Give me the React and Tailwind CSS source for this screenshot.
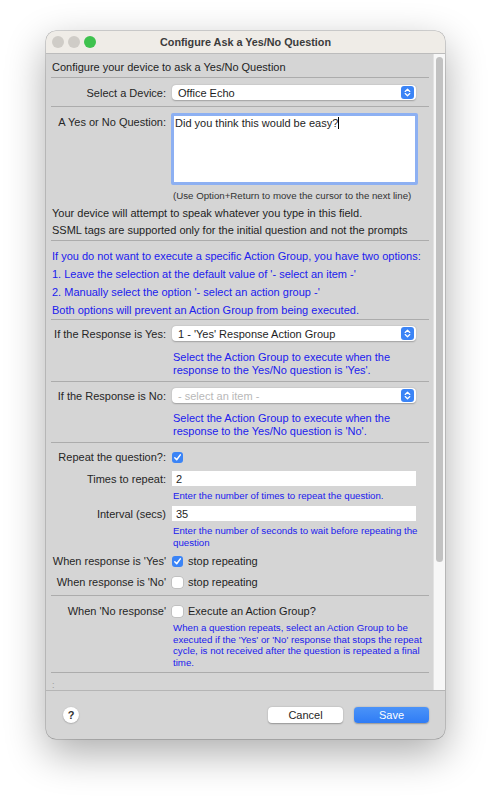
import React from 'react';

const BLUE_TEXT = 'text-[#2020ee]';

function Divider({ className = '' }) {
  return <div className={`h-px shrink-0 bg-[#acacac] ${className}`} />;
}

function Stepper() {
  return (
    <svg width="13" height="13" viewBox="0 0 13 13" className="shrink-0">
      <rect x="0" y="0" width="13" height="13" rx="3" fill="#3b84f6" />
      <path d="M4.2 5.4 L6.5 3.3 L8.8 5.4" fill="none" stroke="#fff" strokeWidth="1.3" strokeLinecap="round" strokeLinejoin="round" />
      <path d="M4.2 7.6 L6.5 9.7 L8.8 7.6" fill="none" stroke="#fff" strokeWidth="1.3" strokeLinecap="round" strokeLinejoin="round" />
    </svg>
  );
}

function Select({ value, disabled }) {
  return (
    <div className="w-[244px] h-[15px] bg-white rounded-[4px] shadow-[0_0.5px_1.5px_rgba(0,0,0,0.25)] flex items-center justify-between pl-[6px] pr-[2px]">
      <span className={disabled ? 'text-[#b8b8b8]' : 'text-[#1e1e1e]'}>{value}</span>
      <Stepper />
    </div>
  );
}

function Label({ children, className = '' }) {
  return (
    <div className={`w-[115px] shrink-0 text-right text-[#262626] ${className}`}>{children}</div>
  );
}

function Checkbox({ checked }) {
  if (checked) {
    return (
      <div className="w-[11px] h-[11px] rounded-[3px] bg-[#3b84f6] flex items-center justify-center shrink-0">
        <svg width="9" height="9" viewBox="0 0 9 9">
          <path d="M1.8 4.8 L3.7 6.8 L7.3 1.9" fill="none" stroke="#fff" strokeWidth="1.5" strokeLinecap="round" strokeLinejoin="round" />
        </svg>
      </div>
    );
  }
  return <div className="w-[11px] h-[11px] rounded-[3px] bg-white shadow-[0_0_0_0.5px_rgba(0,0,0,0.18)] shrink-0" />;
}

function Input({ value }) {
  return (
    <div className="w-[244px] h-[15px] bg-white flex items-center pl-[4px] text-[#1e1e1e]">{value}</div>
  );
}

export default function App() {
  return (
    <div className="w-[491px] h-[800px] bg-white pt-[31px] pl-[46px] font-['Liberation_Sans',Arial,sans-serif] text-[11px] leading-[14px] text-[#1e1e1e]">
      <div className="w-[399px] h-[708px] rounded-[10px] overflow-hidden flex flex-col bg-[#d5d5d5] shadow-[0_14px_40px_rgba(0,0,0,0.33),0_0_0_0.5px_rgba(0,0,0,0.3)]">
        {/* title bar */}
        <div className="h-[23px] shrink-0 bg-[#efece7] border-b border-[#bcbcbc] grid grid-cols-[1fr_auto_1fr] items-center">
          <div className="flex items-center gap-[4px] pl-[6px]">
            <span className="w-[12px] h-[12px] rounded-full bg-[#cfccc7]" />
            <span className="w-[12px] h-[12px] rounded-full bg-[#cfccc7]" />
            <span className="w-[12px] h-[12px] rounded-full bg-[#3ec24e]" />
          </div>
          <div className="font-bold text-[10.8px] text-[#3b3b3b]">Configure Ask a Yes/No Question</div>
          <div />
        </div>

        {/* content */}
        <div className="h-[636px] shrink-0 flex">
          <div className="flex-1 min-w-0 overflow-hidden pl-[5px] pr-[4px]">
            <p className="pt-[6px] pl-[1px]">Configure your device to ask a Yes/No Question</p>
            <Divider className="mt-[3px]" />

            <div className="flex items-center gap-[6px] pt-[7px] pb-[6px]">
              <Label>Select a Device:</Label>
              <Select value="Office Echo" />
            </div>
            <Divider />

            <div className="flex items-start gap-[6px] pt-[6px]">
              <Label className="mt-[2px]">A Yes or No Question:</Label>
              <div className="w-[247px] h-[72px] -ml-[1px] bg-white border-[3px] border-[#8db0f2] rounded-[2px] pl-[1px] pt-[1px] leading-[13px]">
                Did you think this would be easy?<span className="inline-block w-px h-[12px] bg-black align-[-2px]" />
              </div>
            </div>
            <p className="mt-[4px] pl-[122px] text-[9.7px] text-[#333]">(Use Option+Return to move the cursor to the next line)</p>
            <div className="mt-[2px] pl-[1px] leading-[17px]">
              <p>Your device will attempt to speak whatever you type in this field.</p>
              <p>SSML tags are supported only for the initial question and not the prompts</p>
            </div>
            <Divider className="mt-[1px]" />

            <div className={`pt-[6px] pl-[1px] leading-[18px] ${BLUE_TEXT}`}>
              <p>If you do not want to execute a specific Action Group, you have two options:</p>
              <p>1. Leave the selection at the default value of '- select an item -'</p>
              <p>2. Manually select the option '- select an action group -'</p>
              <p>Both options will prevent an Action Group from being executed.</p>
            </div>
            <Divider />

            <div className="flex items-center gap-[6px] pt-[6px]">
              <Label>If the Response is Yes:</Label>
              <Select value="1 - 'Yes' Response Action Group" />
            </div>
            <p className={`mt-[10px] pb-[5px] pl-[122px] leading-[12.5px] ${BLUE_TEXT}`}>
              Select the Action Group to execute when the<br />response to the Yes/No question is 'Yes'.
            </p>
            <Divider />

            <div className="flex items-center gap-[6px] pt-[6px]">
              <Label>If the Response is No:</Label>
              <Select value="- select an item -" disabled />
            </div>
            <p className={`mt-[9px] pb-[5px] pl-[122px] leading-[12.5px] ${BLUE_TEXT}`}>
              Select the Action Group to execute when the<br />response to the Yes/No question is 'No'.
            </p>
            <Divider />

            <div className="flex items-center gap-[6px] mt-[7px] h-[14px]">
              <Label>Repeat the question?:</Label>
              <Checkbox checked />
            </div>
            <div className="flex items-center gap-[6px] mt-[7px]">
              <Label>Times to repeat:</Label>
              <Input value="2" />
            </div>
            <p className={`mt-[4px] pl-[122px] text-[9.7px] leading-[11.5px] ${BLUE_TEXT}`}>Enter the number of times to repeat the question.</p>
            <div className="flex items-center gap-[6px] mt-[4.5px]">
              <Label>Interval (secs)</Label>
              <Input value="35" />
            </div>
            <p className={`mt-[4px] pl-[122px] text-[9.7px] leading-[11.5px] ${BLUE_TEXT}`}>
              Enter the number of seconds to wait before repeating the<br />question
            </p>
            <div className="flex items-center gap-[6px] mt-[6px] h-[14px]">
              <Label>When response is 'Yes'</Label>
              <Checkbox checked />
              <span className="ml-[-1px]">stop repeating</span>
            </div>
            <div className="flex items-center gap-[6px] mt-[7px] h-[14px]">
              <Label>When response is 'No'</Label>
              <Checkbox />
              <span className="ml-[-1px]">stop repeating</span>
            </div>
            <Divider className="mt-[6px]" />

            <div className="flex items-center gap-[6px] mt-[8px] h-[14px]">
              <Label>When 'No response'</Label>
              <Checkbox />
              <span className="ml-[-1px]">Execute an Action Group?</span>
            </div>
            <p className={`mt-[4px] pl-[122px] text-[9.7px] leading-[11.6px] ${BLUE_TEXT}`}>
              When a question repeats, select an Action Group to be<br />
              executed if the 'Yes' or 'No' response that stops the repeat<br />
              cycle, is not received after the question is repeated a final<br />
              time.
            </p>
            <Divider className="mt-[3.6px]" />
            <p className="mt-[9px] pl-[1px] text-[9px] leading-[7px] text-[#9a9a9a]">:</p>
          </div>

          {/* scrollbar */}
          <div className="w-[12px] shrink-0 bg-[#f7f7f7] border-l border-[#e2e2e2] pt-[3px] pl-[2px]">
            <div className="w-[7px] h-[505px] rounded-full bg-[#c2c2c2]" />
          </div>
        </div>

        {/* footer */}
        <div className="h-[49px] shrink-0 border-t border-[#b5b5b5] flex items-center pl-[17px] pr-[16px]">
          <div className="w-[16px] h-[16px] rounded-full bg-white shadow-[0_0.5px_1.5px_rgba(0,0,0,0.3)] flex items-center justify-center font-bold text-[11px] text-[#333]">?</div>
          <div className="ml-auto flex gap-[11px]">
            <button className="w-[75px] h-[16px] rounded-[4px] bg-white shadow-[0_0.5px_1.5px_rgba(0,0,0,0.3)] text-[11px] text-[#262626] leading-[16px]">Cancel</button>
            <button className="w-[75px] h-[16px] rounded-[4px] bg-gradient-to-b from-[#4b93f8] to-[#2f7cf5] shadow-[0_0.5px_1.5px_rgba(0,0,0,0.3)] text-[11px] text-white leading-[16px]">Save</button>
          </div>
        </div>
      </div>
    </div>
  );
}
